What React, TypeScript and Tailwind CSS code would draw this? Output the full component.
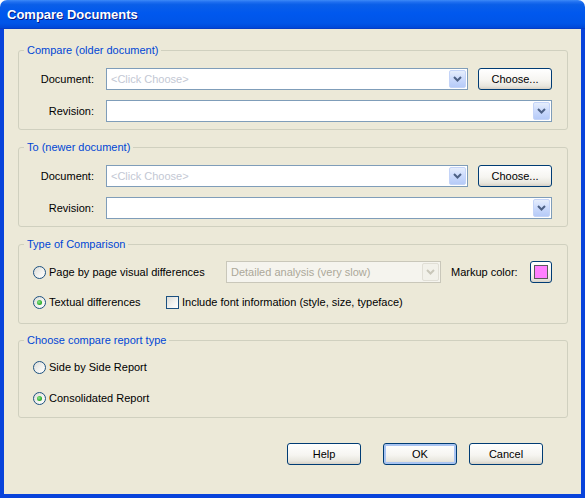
import type { ReactNode } from "react"

function Arrow({ disabled }: { disabled?: boolean }) {
  return (
    <span
      className={
        "w-[17px] h-[18px] shrink-0 rounded-[2px] border flex items-center justify-center " +
        (disabled
          ? "border-[#E1DFD6] bg-[#F2F1EA]"
          : "border-[#C4D4F8] bg-[linear-gradient(to_bottom,#e6eefc_0%,#cbdafc_50%,#b6cbf8_100%)]")
      }
    >
      <svg width="9" height="6" viewBox="0 0 9 6">
        <path
          d="M1 1 L4.5 4.5 L8 1"
          stroke={disabled ? "#C9C7BA" : "#4D6185"}
          strokeWidth="2"
          fill="none"
        />
      </svg>
    </span>
  )
}

function Combo({ text, disabled, className = "" }: { text?: string; disabled?: boolean; className?: string }) {
  return (
    <div
      className={
        "h-[22px] flex items-center pl-[4px] pr-[1px] border " +
        (disabled ? "border-[#C9C7BA] bg-[#F5F4EE]" : "border-[#7F9DB9] bg-white") +
        " " +
        className
      }
    >
      <span className={"flex-1 truncate " + (disabled ? "text-[#ACA899]" : "text-[#C3C8D4]")}>{text}</span>
      <Arrow disabled={disabled} />
    </div>
  )
}

function XpButton({ children, def, className = "" }: { children?: ReactNode; def?: boolean; className?: string }) {
  return (
    <button
      className={
        "h-[22px] shrink-0 rounded-[3px] border border-[#003C74] text-black text-[11px] flex items-center justify-center bg-[linear-gradient(to_bottom,#ffffff_0%,#f6f5f1_55%,#e8e6de_85%,#d6d0c5_100%)] " +
        (def ? "shadow-[inset_0_0_0_2px_#A9C4F2] " : "") +
        className
      }
    >
      {children}
    </button>
  )
}

function Radio({ checked }: { checked?: boolean }) {
  return (
    <span className="w-[13px] h-[13px] shrink-0 rounded-full border border-[#1C5180] bg-[linear-gradient(135deg,#dcdcd7_0%,#f4f4f1_60%,#ffffff_100%)] flex items-center justify-center">
      {checked && (
        <span className="w-[5px] h-[5px] rounded-full bg-[radial-gradient(circle_at_40%_40%,#8ee88e_0%,#2fae2f_60%,#1c911c_100%)]" />
      )}
    </span>
  )
}

function Checkbox() {
  return (
    <span className="w-[13px] h-[13px] shrink-0 border border-[#1C5180] bg-[linear-gradient(135deg,#dcdcd7_0%,#f4f4f1_60%,#ffffff_100%)]" />
  )
}

function Group({ title, className = "", children }: { title: string; className?: string; children: ReactNode }) {
  return (
    <fieldset className={"border border-[#D0D0BF] rounded-[3px] min-w-0 " + className}>
      <legend className="ml-[5px] px-[3px] leading-[13px] text-[#0046D5]">{title}</legend>
      {children}
    </fieldset>
  )
}

function DocRows() {
  return (
    <div className="flex flex-col gap-[10px]">
      <div className="flex items-center">
        <span className="w-[75px] text-right">Document:</span>
        <Combo text="<Click Choose>" className="ml-[12px] w-[362px]" />
        <XpButton className="ml-[10px] w-[74px]">Choose...</XpButton>
      </div>
      <div className="flex items-center">
        <span className="w-[75px] text-right">Revision:</span>
        <Combo className="ml-[12px] flex-1" />
      </div>
    </div>
  )
}

export default function App() {
  return (
    <div className="w-[585px] h-[498px] flex flex-col font-['Liberation_Sans',Arial,sans-serif] text-[11px] text-black">
      {/* title bar */}
      <div className="h-[29px] shrink-0 rounded-t-[7px] pl-[7px] pt-[1px] flex items-center bg-[linear-gradient(to_bottom,#3d8af7_0%,#1f6ff0_7%,#0a5fe8_16%,#0058ee_45%,#0055e8_80%,#0048d8_96%,#0a35b8_100%)]">
        <span className="text-white font-bold text-[13px] [text-shadow:1px_1px_0_#0A1883]">Compare Documents</span>
      </div>

      <div className="flex-1 flex flex-col bg-[#ECE9D8] border-l-[4px] border-r-[4px] border-b-[4px] border-[#0843DB] pl-[14px] pr-[13px] pt-[15px]">
        <Group title="Compare (older document)" className="pt-[11px] pb-[7px] pr-[15px]">
          <DocRows />
        </Group>

        <Group title="To (newer document)" className="mt-[11px] pt-[11px] pb-[7px] pr-[15px]">
          <DocRows />
        </Group>

        <Group title="Type of Comparison" className="mt-[11px] pt-[10px] pb-[10px] pr-[15px]">
          <div className="flex flex-col gap-[8px] pl-[14px]">
            <div className="flex items-center h-[22px]">
              <div className="w-[193px] flex items-center gap-[3px]">
                <Radio />
                <span>Page by page visual differences</span>
              </div>
              <Combo text="Detailed analysis (very slow)" disabled className="w-[215px]" />
              <span className="ml-[10px]">Markup color:</span>
              <XpButton className="ml-auto w-[22px]">
                <span className="w-[14px] h-[14px] bg-[#FF80FF] border border-[#5a5a5a]" />
              </XpButton>
            </div>
            <div className="flex items-center h-[22px]">
              <div className="w-[133px] flex items-center gap-[3px]">
                <Radio checked />
                <span>Textual differences</span>
              </div>
              <div className="flex items-center gap-[3px]">
                <Checkbox />
                <span>Include font information (style, size, typeface)</span>
              </div>
            </div>
          </div>
        </Group>

        <Group title="Choose compare report type" className="mt-[10px] pt-[9px] pb-[8px]">
          <div className="flex flex-col gap-[9px] pl-[14px]">
            <div className="flex items-center h-[22px] gap-[3px]">
              <Radio />
              <span>Side by Side Report</span>
            </div>
            <div className="flex items-center h-[22px] gap-[3px]">
              <Radio checked />
              <span>Consolidated Report</span>
            </div>
          </div>
        </Group>

        <div className="mt-[25px] flex justify-end pr-[25px] gap-[12px]">
          <XpButton className="w-[74px] mr-[10px]">Help</XpButton>
          <XpButton def className="w-[74px]">OK</XpButton>
          <XpButton className="w-[74px]">Cancel</XpButton>
        </div>
      </div>
    </div>
  )
}
